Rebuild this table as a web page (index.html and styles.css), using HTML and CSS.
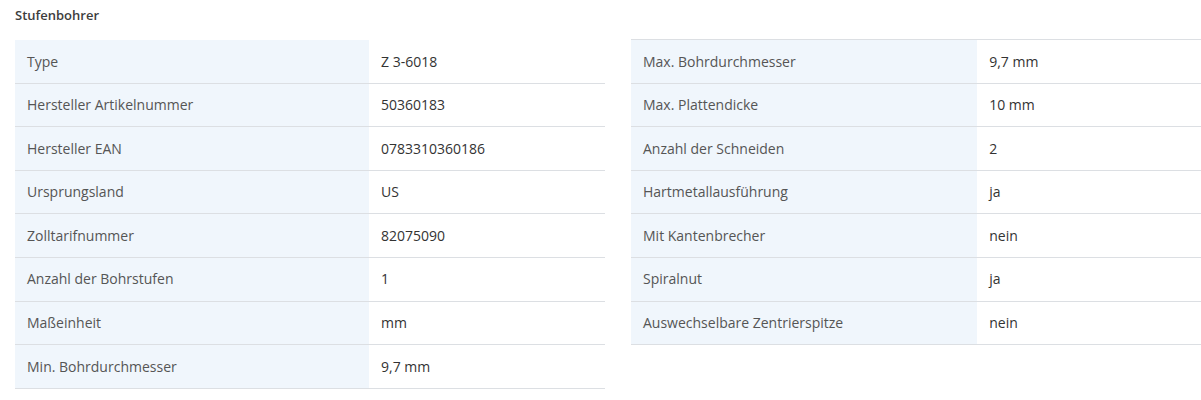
FILE: index.html
```html
<!DOCTYPE html>
<html lang="de">
<head>
  <meta charset="UTF-8">
  <meta name="viewport" content="width=device-width, initial-scale=1.0">
  <title>Stufenbohrer</title>
  <link rel="stylesheet" href="styles.css">
</head>
<body>
  <div class="specs">
    <h2 class="specs-title">Stufenbohrer</h2>
    <div class="specs-grid">
      <table class="spec-table spec-table--first">
        <tbody>
          <tr><th>Type</th><td>Z 3-6018</td></tr>
          <tr><th>Hersteller Artikelnummer</th><td>50360183</td></tr>
          <tr><th>Hersteller EAN</th><td>0783310360186</td></tr>
          <tr><th>Ursprungsland</th><td>US</td></tr>
          <tr><th>Zolltarifnummer</th><td>82075090</td></tr>
          <tr><th>Anzahl der Bohrstufen</th><td>1</td></tr>
          <tr><th>Maßeinheit</th><td>mm</td></tr>
          <tr><th>Min. Bohrdurchmesser</th><td>9,7 mm</td></tr>
        </tbody>
      </table>

      <table class="spec-table">
        <tbody>
          <tr><th>Max. Bohrdurchmesser</th><td>9,7 mm</td></tr>
          <tr><th>Max. Plattendicke</th><td>10 mm</td></tr>
          <tr><th>Anzahl der Schneiden</th><td>2</td></tr>
          <tr><th>Hartmetallausführung</th><td>ja</td></tr>
          <tr><th>Mit Kantenbrecher</th><td>nein</td></tr>
          <tr><th>Spiralnut</th><td>ja</td></tr>
          <tr><th>Auswechselbare Zentrierspitze</th><td>nein</td></tr>
        </tbody>
      </table>
    </div>
  </div>
</body>
</html>
```

FILE: styles.css
```css
body {
  margin: 0;
  font-family: "Open Sans", Arial, sans-serif;
  background: #fff;
  overflow-x: hidden;
}
.specs {
  padding-left: 15px;
}
.specs-title {
  margin: 0;
  padding-top: 6px;
  font-size: 13px;
  font-weight: 600;
  line-height: 18px;
  color: #3d3d3d;
  height: 33px;
}
.specs-grid {
  display: grid;
  grid-template-columns: 590px 577px;
  column-gap: 26px;
  align-items: start;
}
.spec-table {
  width: 100%;
  border-collapse: collapse;
  border-top: 1px solid #dcdfe3;
}
.spec-table--first {
  border-top-color: transparent;
}
.spec-table th,
.spec-table td {
  padding: 11.5px 12px;
  font-size: 14px;
  line-height: 19.6px;
  text-align: left;
  border-bottom: 1px solid #dcdfe3;
}
.spec-table th {
  width: 60%;
  background: #f0f6fc;
  font-weight: normal;
  color: #555;
}
.spec-table td {
  color: #333;
}
```
